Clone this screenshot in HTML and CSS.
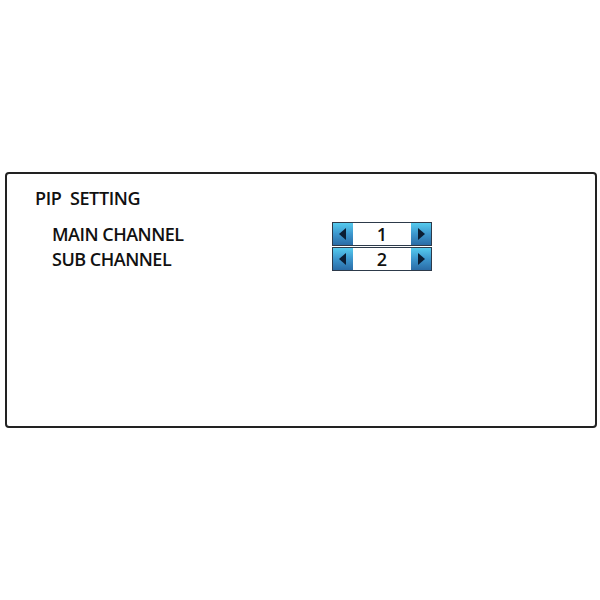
FILE: index.html
```html
<!DOCTYPE html>
<html>
<head>
	<meta charset="utf-8">
	<title>PIP Setting</title>
	<link rel="stylesheet" href="styles.css">
</head>
<body>

	<div class="panel">
		<h2 class="title">PIP&nbsp; SETTING</h2>

		<div class="rows">
			<div class="row">
				<span class="label">MAIN CHANNEL</span>
				<div class="spinner">
					<button class="arrow left"></button>
					<span class="value">1</span>
					<button class="arrow right"></button>
				</div>
			</div>
			<div class="row">
				<span class="label">SUB CHANNEL</span>
				<div class="spinner">
					<button class="arrow left"></button>
					<span class="value">2</span>
					<button class="arrow right"></button>
				</div>
			</div>
		</div>
	</div>

</body>
</html>
```

FILE: styles.css
```css
body {
	margin: 0;
	background: #fff;
	font-family: "Open Sans", Arial, sans-serif;
	color: #111;
}
.panel {
	box-sizing: border-box;
	width: 592px;
	height: 256px;
	margin: 172px 0 0 5px;
	border: 2px solid #222;
	border-radius: 4px;
	padding: 12px 0 0 28px;
}
.title {
	margin: 0;
	font-size: 18px;
	font-weight: 600;
	line-height: 24px;
	letter-spacing: -0.4px;
}
.rows {
	margin-top: 12px;
	padding-left: 17px;
	display: flex;
	flex-direction: column;
	gap: 1px;
}
.row {
	display: flex;
	align-items: center;
	height: 24px;
}
.label {
	width: 280px;
	font-size: 18px;
	font-weight: 600;
	letter-spacing: -0.5px;
}
.spinner {
	display: flex;
	width: 100px;
	height: 24px;
	border: 1px solid #2d3a4a;
	box-sizing: border-box;
}
.arrow {
	position: relative;
	width: 20px;
	padding: 0;
	border: none;
	background: linear-gradient(#55cbee, #3c96cd 50%, #2a6ca6);
}
.arrow::after {
	content: "";
	position: absolute;
	top: 5px;
	border-top: 6px solid transparent;
	border-bottom: 6px solid transparent;
}
.arrow.left::after {
	left: 6px;
	border-right: 7px solid #0b1d33;
}
.arrow.right::after {
	left: 7px;
	border-left: 7px solid #0b1d33;
}
.value {
	flex: 1;
	background: #fff;
	text-align: center;
	font-size: 18px;
	font-weight: 600;
	line-height: 22px;
}
```
